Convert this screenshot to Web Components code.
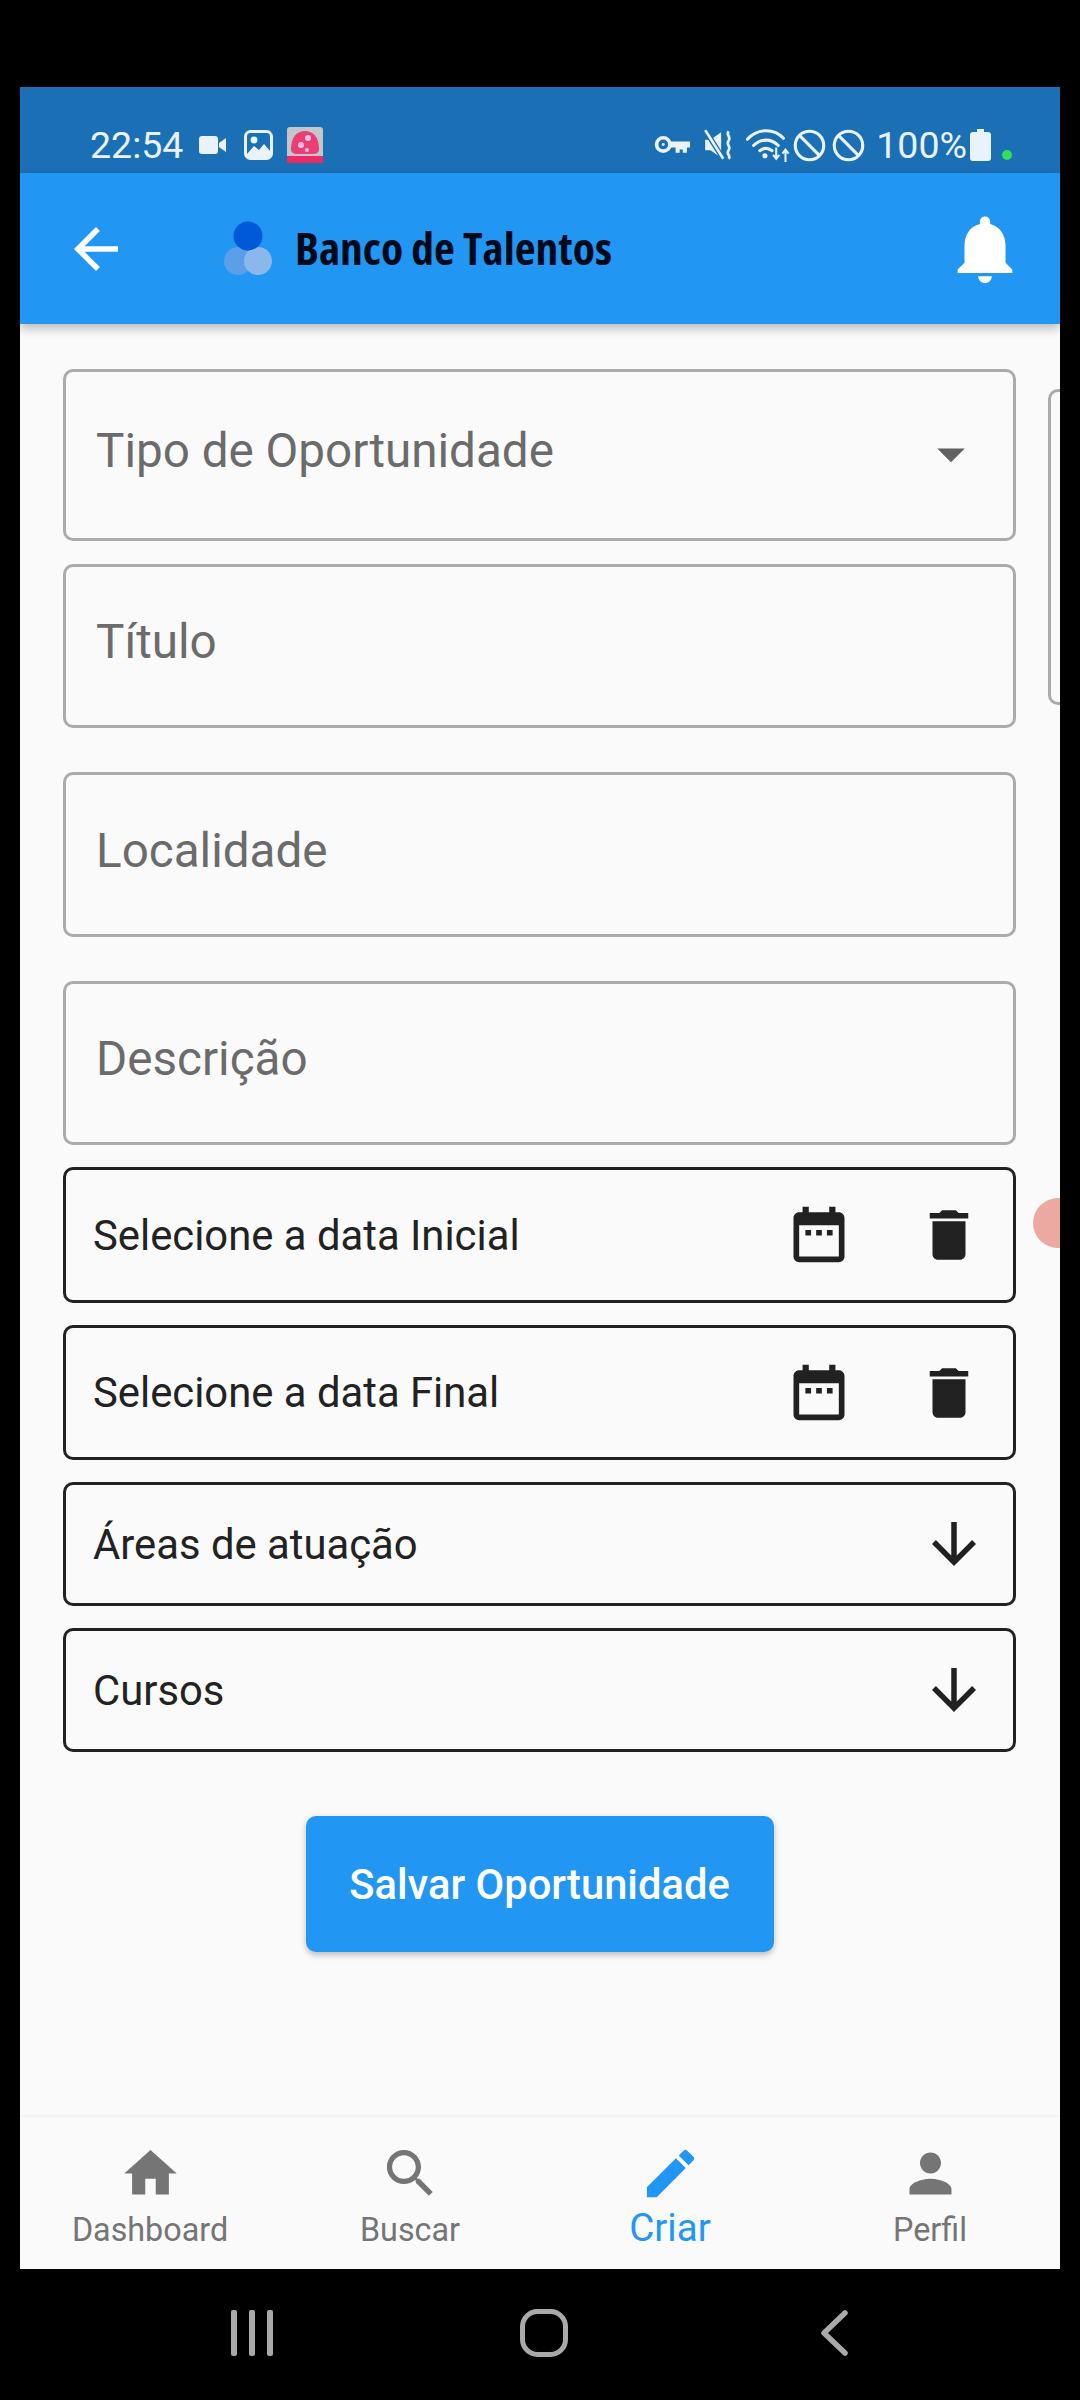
<!DOCTYPE html>
<html lang="pt">
<head>
<meta charset="utf-8">
<title>Banco de Talentos</title>
<style>
  html, body { margin: 0; background: #000; }
  body { width: 1080px; height: 2400px; overflow: hidden; font-family: Roboto, "Liberation Sans", sans-serif; }
  #phone { display: flex; flex-direction: column; height: 2400px; padding-top: 87px; box-sizing: border-box; }
</style>
</head>
<body>
<div id="phone">
  <phone-screen>
    <status-bar time="22:54" level="100%"></status-bar>
    <app-bar>Banco de Talentos</app-bar>
    <opp-form>
      <text-field dropdown style="margin-top:45px;height:172px">Tipo de Oportunidade</text-field>
      <text-field style="margin-top:23px;height:164px">Título</text-field>
      <text-field style="margin-top:44px;height:165px">Localidade</text-field>
      <text-field style="margin-top:44px;height:164px">Descrição</text-field>
      <pick-row kind="date" style="margin-top:22px;height:136px">Selecione a data Inicial</pick-row>
      <pick-row kind="date" style="margin-top:22px;height:135px">Selecione a data Final</pick-row>
      <pick-row kind="list" style="margin-top:22px;height:124px">Áreas de atuação</pick-row>
      <pick-row kind="list" style="margin-top:22px;height:124px">Cursos</pick-row>
      <save-button style="margin-top:64px">Salvar Oportunidade</save-button>
    </opp-form>
    <bottom-nav>
      <nav-item icon="home">Dashboard</nav-item>
      <nav-item icon="search">Buscar</nav-item>
      <nav-item icon="edit" active>Criar</nav-item>
      <nav-item icon="person">Perfil</nav-item>
    </bottom-nav>
  </phone-screen>
  <system-nav></system-nav>
</div>

<script>
const PATHS = {
  back: 'M20 11H7.83l5.59-5.59L12 4l-8 8 8 8 1.41-1.41L7.83 13H20v-2z',
  bell: 'M12 22c1.1 0 2-.9 2-2h-4c0 1.1.89 2 2 2zm6-6v-5c0-3.07-1.64-5.64-4.5-6.32V4c0-.83-.67-1.5-1.5-1.5s-1.5.67-1.5 1.5v.68C7.63 5.36 6 7.92 6 11v5l-2 2v1h16v-1l-2-2z',
  drop: 'M7 10l5 5 5-5z',
  calendar: 'M19 4h-1.2V2h-2.2v2H8.4V2H6.2v2H5c-1.1 0-2 .9-2 2v13.6c0 1.1.9 2 2 2h14c1.1 0 2-.9 2-2V6c0-1.1-.9-2-2-2zm0 15.6H5V8.6h14v11zM7.2 10.2h2v2h-2zM11 10.2h2v2h-2zM14.8 10.2h2v2h-2z',
  trash: 'M6 19c0 1.1.9 2 2 2h8c1.1 0 2-.9 2-2V7H6v12zM19 4h-3.5l-1-1h-5l-1 1H5v2h14V4z',
  down: 'M20 12l-1.41-1.41L13 16.17V4h-2v12.17l-5.58-5.59L4 12l8 8 8-8z',
  home: 'M10 20v-6h4v6h5v-8h3L12 3 2 12h3v8z',
  search: 'M15.5 14h-.79l-.28-.27C15.41 12.59 16 11.11 16 9.5 16 5.91 13.09 3 9.5 3S3 5.91 3 9.5 5.91 16 9.5 16c1.61 0 3.09-.59 4.23-1.57l.27.28v.79l5 4.99L20.49 19l-4.99-5zm-6 0C7.01 14 5 11.99 5 9.5S7.01 5 9.5 5 14 7.01 14 9.5 11.99 14 9.5 14z',
  edit: 'M3 17.25V21h3.75L17.81 9.94l-3.75-3.75L3 17.25zM20.71 7.04c.39-.39.39-1.02 0-1.41l-2.34-2.34c-.39-.39-1.02-.39-1.41 0l-1.83 1.83 3.75 3.75 1.83-1.83z',
  person: 'M12 12c2.21 0 4-1.79 4-4s-1.79-4-4-4-4 1.79-4 4 1.79 4 4 4zm0 2c-2.67 0-8 1.34-8 4v2h16v-2c0-2.66-5.33-4-8-4z'
}

function icon(name, size, color) {
  return `<svg width="${size}" height="${size}" viewBox="0 0 24 24" fill="${color}" style="display:block;flex:none"><path d="${PATHS[name]}"/></svg>`
}

// small base class, every element just hands over its shadow markup
class Base extends HTMLElement {
  constructor() {
    super()
    this.attachShadow({ mode: 'open' })
  }
  connectedCallback() {
    this.shadowRoot.innerHTML = this.markup()
  }
}

customElements.define('phone-screen', class extends Base {
  markup() {
    return `<style>
      :host { display: flex; flex-direction: column; width: 1040px; height: 2182px; margin-left: 20px; background: #fafafa; position: relative; overflow: hidden; }
    </style><slot></slot>`
  }
})

customElements.define('status-bar', class extends Base {
  markup() {
    const c = '#eaf3fb'
    return `<style>
      :host { display: flex; align-items: center; height: 86px; flex: none; background: #1b6fb5; color: ${c}; font-size: 37.5px; padding: 30px 0 0 70px; box-sizing: border-box; }
      svg { display: block; flex: none; }
      .time { margin-right: 16px; }
      .level { margin: 0 3px 0 11px; }
    </style>
    <span class="time">${this.getAttribute('time')}</span>
    <svg width="28" height="20" viewBox="0 0 28 20"><rect y="1" width="19" height="18" rx="3" fill="${c}"/><path d="M20 8l7-5v14l-7-5z" fill="${c}"/></svg>
    <svg style="margin-left:17px" width="29" height="30" viewBox="0 0 29 30"><rect x="1.5" y="1.5" width="26" height="27" rx="5" fill="none" stroke="${c}" stroke-width="3"/><circle cx="10" cy="10" r="3.4" fill="${c}"/><path d="M3 24l7-8 5 4 5-6 7 8v5H3z" fill="${c}"/></svg>
    <svg style="margin-left:14px" width="36" height="36" viewBox="0 0 36 36"><rect width="36" height="36" rx="3" fill="#c3c7cc"/><path d="M4 22C4 10 10 4 18 4s14 6 14 18c0 4-3 5-6 5H10c-3 0-6-1-6-5z" fill="#ea3f72"/><circle cx="21" cy="11" r="3" fill="#fbe"/><circle cx="14" cy="18" r="3" fill="#fbe"/><circle cx="20" cy="23" r="2" fill="#fbe"/><rect y="29" width="36" height="7" fill="#ee2a66"/></svg>
    <span style="flex:1"></span>
    <svg width="37" height="23" viewBox="0 0 36 22"><circle cx="9" cy="10" r="6.5" fill="none" stroke="${c}" stroke-width="3.5"/><path d="M15 7h20v6h-3v5h-4v-3h-3v3h-4v-5h-6z" fill="${c}"/><circle cx="9" cy="10" r="1.4" fill="${c}"/></svg>
    <svg style="margin-left:13px" width="30" height="34" viewBox="0 0 28 32"><path d="M1 11h5l10-7v24L6 21H1z" fill="${c}"/><path d="M1 2l17 27" stroke="#1b6fb5" stroke-width="5"/><path d="M1 2l17 27" stroke="${c}" stroke-width="2.5"/><path d="M23 3c-3 4 3 5 0 9s3 5 0 9 3 5 0 8" fill="none" stroke="${c}" stroke-width="2.5"/></svg>
    <svg style="margin-left:12px" width="45" height="35" viewBox="0 0 43 34"><g fill="none" stroke="${c}" stroke-width="3" stroke-linecap="round"><path d="M1 11C11 0 27 0 36 10"/><path d="M7 17c7-7 17-7 24 0"/><path d="M13 22c4-3 8-3 12 0"/></g><circle cx="18" cy="27" r="2.5" fill="${c}"/><path d="M29 19v11M26 26l3 4 3-4M38 33V22M35 25l3-4 3 4" fill="none" stroke="${c}" stroke-width="2"/></svg>
    <svg style="margin-left:2px" width="33" height="33" viewBox="0 0 32 32"><circle cx="16" cy="16" r="13.8" fill="none" stroke="${c}" stroke-width="3"/><path d="M6 6l20 20" stroke="${c}" stroke-width="3"/></svg>
    <svg style="margin-left:6px" width="33" height="33" viewBox="0 0 32 32"><circle cx="16" cy="16" r="13.8" fill="none" stroke="${c}" stroke-width="3"/><path d="M6 6l20 20" stroke="${c}" stroke-width="3"/></svg>
    <span class="level">${this.getAttribute('level')}</span>
    <svg width="21" height="32" viewBox="0 0 21 32"><path d="M7 0h7v3h4c2 0 3 1 3 3v23c0 2-1 3-3 3H3c-2 0-3-1-3-3V6c0-2 1-3 3-3h4z" fill="${c}"/></svg>
    <svg style="margin:20px 48px 0 11px" width="10" height="10" viewBox="0 0 10 10"><circle cx="5" cy="5" r="5" fill="#33e05a"/></svg>`
  }
})

customElements.define('app-bar', class extends Base {
  markup() {
    return `<style>
      :host { display: flex; align-items: center; height: 151px; flex: none; background: #2196f3; box-shadow: 0 4px 10px rgba(0,0,0,.28); position: relative; z-index: 2; padding-left: 43px; box-sizing: border-box; }
      .title { font: 700 45.5px "Open Sans", "Liberation Sans", sans-serif; font-stretch: 75%; color: #00091a; white-space: nowrap; margin: 0 0 3px 10px; }
      .bell { margin-left: auto; margin-right: 34px; }
    </style>
    ${icon('back', 66, '#fff')}
    <svg style="margin-left:94px;display:block;flex:none" width="62" height="62" viewBox="0 0 62 62">
      <circle cx="15" cy="43" r="14" fill="#5a9fe8"/>
      <circle cx="35" cy="43" r="14" fill="#8ab8ec"/>
      <circle cx="25" cy="18" r="14.5" fill="#0059d6"/>
    </svg>
    <span class="title"><slot></slot></span>
    <span class="bell">${icon('bell', 82, '#fff')}</span>`
  }
})

customElements.define('opp-form', class extends Base {
  markup() {
    return `<style>
      :host { display: flex; flex-direction: column; flex: 1; padding: 0 44px 0 43px; box-sizing: border-box; position: relative; }
      .peek { position: absolute; left: 1028px; top: 65px; width: 40px; height: 316px; box-sizing: border-box; border: 3px solid #ababab; border-radius: 10px; }
      .touch { position: absolute; left: 1013px; top: 874px; width: 50px; height: 50px; border-radius: 50%; background: #eba9a2; }
    </style><slot></slot><div class="peek"></div><div class="touch"></div>`
  }
})

customElements.define('text-field', class extends Base {
  markup() {
    const arrow = this.hasAttribute('dropdown')
      ? `<span class="arrow">${icon('drop', 66, '#616161')}</span>` : ''
    return `<style>
      :host { display: flex; align-items: center; flex: none; box-sizing: border-box; border: 3px solid #ababab; border-radius: 10px; padding: 0 29px 8px 30px; font-size: 47.6px; color: #6b6b6b; }
      .arrow { margin-left: auto; margin-top: 6px; }
    </style><slot></slot>${arrow}`
  }
})

customElements.define('pick-row', class extends Base {
  markup() {
    const date = this.getAttribute('kind') === 'date'
    const side = date
      ? `${icon('calendar', 68, '#212121')}<span style="width:63px"></span>${icon('trash', 66, '#212121')}`
      : icon('down', 66, '#212121')
    return `<style>
      :host { display: flex; align-items: center; flex: none; box-sizing: border-box; border: 3px solid #222; border-radius: 10px; padding: 0 ${date ? 31 : 26}px 0 27px; font-size: 41.8px; color: #222; }
      .side { display: flex; align-items: center; margin-left: auto; }
    </style><slot></slot><span class="side">${side}</span>`
  }
})

customElements.define('save-button', class extends Base {
  markup() {
    return `<style>
      :host { display: flex; align-items: center; justify-content: center; flex: none; align-self: center; width: 468px; height: 136px; background: #2196f3; color: #fff; border-radius: 10px; font-size: 41.7px; font-weight: 500; box-shadow: 0 3px 6px rgba(0,0,0,.25); }
    </style><slot></slot>`
  }
})

customElements.define('bottom-nav', class extends Base {
  markup() {
    return `<style>
      :host { display: grid; grid-template-columns: repeat(4, 1fr); flex: none; height: 152px; background: #fafafa; box-shadow: 0 -1px 3px rgba(0,0,0,.06); position: relative; }
    </style><slot></slot>`
  }
})

customElements.define('nav-item', class extends Base {
  markup() {
    const active = this.hasAttribute('active')
    const color = active ? '#2196f3' : '#757575'
    return `<style>
      :host { display: flex; flex-direction: column; align-items: center; padding-top: 25px; color: ${color}; font-size: ${active ? 38.5 : 32.3}px; line-height: 38px; }
      .label { margin-top: ${active ? 4 : 6}px; }
    </style>${icon(this.getAttribute('icon'), 63, color)}<span class="label"><slot></slot></span>`
  }
})

customElements.define('system-nav', class extends Base {
  markup() {
    const c = '#a9a9a9'
    return `<style>
      :host { display: flex; align-items: center; flex: 1; position: relative; padding-bottom: 4px; box-sizing: border-box; }
      svg { display: block; flex: none; }
    </style>
    <svg style="margin-left:229px" width="46" height="46" viewBox="0 0 46 46"><g fill="${c}"><rect x="2" width="6" height="46" rx="2"/><rect x="20" width="6" height="46" rx="2"/><rect x="38" width="6" height="46" rx="2"/></g></svg>
    <svg style="margin-left:245px" width="48" height="48" viewBox="0 0 48 48"><rect x="2.5" y="2.5" width="43" height="43" rx="15" fill="none" stroke="${c}" stroke-width="5"/></svg>
    <svg style="margin-left:252px" width="28" height="46" viewBox="0 0 28 46"><path d="M25 3L4 23l21 20" fill="none" stroke="${c}" stroke-width="5.5" stroke-linecap="round" stroke-linejoin="round"/></svg>`
  }
})
</script>
</body>
</html>
